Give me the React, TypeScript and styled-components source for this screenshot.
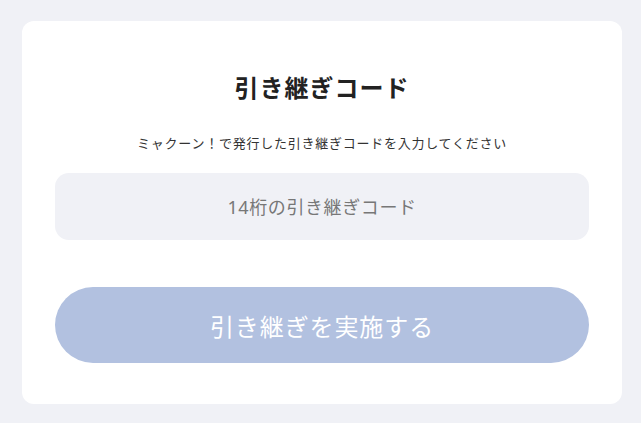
import React from "react";
import styled, { createGlobalStyle } from "styled-components";

const GlobalStyle = createGlobalStyle`
  html, body {
    margin: 0;
    padding: 0;
    background: #f0f1f6;
    font-family: "Noto Sans", "Noto Sans CJK JP", sans-serif;
  }
`;

const Page = styled.div`
  padding: 21px 0 19px 22px;
`;

const Card = styled.section`
  box-sizing: border-box;
  width: 600px;
  background: #ffffff;
  border-radius: 12px;
  padding: 49px 33px 41px;
  display: flex;
  flex-direction: column;
  align-items: stretch;
`;

const Title = styled.h1`
  margin: 0;
  text-align: center;
  font-size: 24px;
  line-height: 36px;
  font-weight: 700;
  color: #222222;
  letter-spacing: 1px;
`;

const Lead = styled.p`
  margin: 27px 0 0;
  text-align: center;
  font-size: 13px;
  line-height: 20px;
  color: #333333;
  letter-spacing: 0.75px;
`;

const CodeInput = styled.input`
  box-sizing: border-box;
  margin-top: 20px;
  width: 100%;
  height: 67px;
  border: none;
  outline: none;
  border-radius: 14px;
  background: #f0f1f6;
  text-align: center;
  font-family: inherit;
  font-size: 18px;
  letter-spacing: 0.6px;
  color: #333333;
  &::placeholder {
    color: #777777;
  }
`;

const SubmitButton = styled.button`
  margin-top: 47px;
  width: 100%;
  height: 76px;
  border: none;
  border-radius: 38px;
  background: #b2c1e0;
  color: #ffffff;
  font-family: inherit;
  font-size: 24px;
  letter-spacing: 0.9px;
  cursor: not-allowed;
`;

export default function App() {
  return (
    <>
      <GlobalStyle />
      <Page>
        <Card>
          <Title>引き継ぎコード</Title>
          <Lead>ミャクーン！で発行した引き継ぎコードを入力してください</Lead>
          <CodeInput placeholder="14桁の引き継ぎコード" />
          <SubmitButton disabled>引き継ぎを実施する</SubmitButton>
        </Card>
      </Page>
    </>
  );
}
